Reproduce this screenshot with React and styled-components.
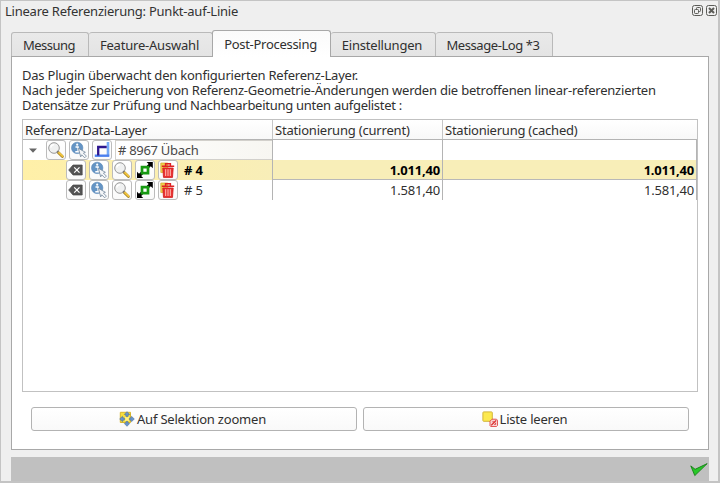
import React from "react";
import styled, { createGlobalStyle, css } from "styled-components";

const GlobalStyle = createGlobalStyle`
  *, *::before, *::after { box-sizing: border-box; }
  body { margin: 0; background: #efefef; }
`;

const Dock = styled.main`
  width: 720px;
  height: 483px;
  display: flex;
  flex-direction: column;
  overflow: hidden;
  background: #efefef;
  border: 1px solid #c4c4c4;
  border-right-width: 2px;
  border-bottom-width: 2px;
  color: #303030;
  font: 13px/15px "Noto Sans", "Open Sans", sans-serif;
`;

const Label = styled.span`
  letter-spacing: ${(p) => p.$track ?? -0.2}px;
  white-space: pre;
`;

const TitleBar = styled.header`
  height: 30px;
  flex: none;
  display: flex;
  justify-content: space-between;
  align-items: flex-start;
  padding: 3px 1px 0 4px;
  color: #333;
`;

const WindowButtons = styled.div`
  display: flex;
  gap: 3px;
  padding-top: 1px;
  svg { display: block; }
`;

const TabBar = styled.nav`
  height: 25px;
  flex: none;
  display: flex;
  align-items: flex-end;
  padding-left: 10px;
  z-index: 1;
`;

const Tab = styled.div`
  width: ${(p) => p.$width}px;
  height: 24px;
  display: flex;
  justify-content: center;
  padding: 5px 2px 0 0;
  background: linear-gradient(#e9e9e9, #e4e4e4);
  border: 1px solid #b9b9b9;
  border-left-width: ${(p) => (p.$first ? 1 : 0)}px;
  border-bottom: 0;
  border-radius: 3px 3px 0 0;
  ${(p) =>
    p.$active &&
    css`
      height: 27px;
      margin: 0 0 -1px -1px;
      border-left-width: 1px;
      border-color: #a8a8a8;
      padding-top: 6px;
      background: linear-gradient(#fafafa, #fff);
    `}
`;

const Panel = styled.section`
  width: 698px;
  height: 394px;
  flex: none;
  margin-left: 10px;
  padding: 11px 10px 0;
  background: #fff;
  border: 1px solid #a8a8a8;
`;

const Description = styled.div`
  display: flex;
  flex-direction: column;
  height: 51px;
`;

const Tree = styled.div`
  width: 676px;
  height: 273px;
  border: 1px solid #c1c1c1;
  background: #fff;
`;

const columns = css`
  display: grid;
  grid-template-columns: 250px 170px 1fr;
`;

const TreeHeader = styled.div`
  ${columns}
  height: 20px;
  background: linear-gradient(#fff, #f8f8f8);
  border-bottom: 1px solid #b4b4b4;
`;

const HeaderCell = styled.div`
  padding: 3px 0 0 2px;
  border-right: 1px solid ${(p) => (p.$last ? "transparent" : "#c6c6c6")};
`;

const TreeRow = styled.div`
  ${columns}
  height: 20px;
  ${(p) =>
    p.$selected &&
    css`
      background: #f8eeb8;
      border-bottom: 1px solid #b8b8b8;
      color: #000;
      font-weight: 700;
    `}
`;

const TreeCell = styled.div`
  display: flex;
  align-items: flex-start;
  padding-left: ${(p) => p.$indent}px;
  background: ${(p) => (p.$selected ? "linear-gradient(90deg, #fff0a8, #f8eeb8)" : "transparent")};
  border-right: 1px solid #b4b4b4;
`;

const ValueCell = styled.div`
  display: flex;
  justify-content: flex-end;
  padding: 3px 2px 0 0;
  border-right: 1px solid #b4b4b4;
`;

const Expander = styled.svg`
  width: 8px;
  height: 5px;
  margin: 8px 9px 0 0;
`;

const ToolButton = styled.button`
  width: 20px;
  height: 20px;
  flex: none;
  display: flex;
  align-items: center;
  justify-content: center;
  margin-right: 3px;
  padding: 0;
  border: 1px solid #bcbcbc;
  border-radius: 3px;
  background: linear-gradient(#fff, #fafafa);
  svg { width: 18px; height: 18px; display: block; flex: none; }
`;

const GroupName = styled.div`
  height: 20px;
  flex: 1;
  padding: 2px 0 0 2px;
  background: linear-gradient(90deg, #fff, #f7f6f1);
  border: 1px solid #d2d0cb;
  border-right: 0;
  color: #484848;
`;

const ItemName = styled.div`
  padding: 3px 0 0 3px;
`;

const Actions = styled.div`
  display: grid;
  grid-template-columns: 326px 326px;
  gap: 6px;
  padding: 15px 0 0 9px;
`;

const ActionButton = styled.button`
  height: 24px;
  display: flex;
  align-items: center;
  justify-content: center;
  gap: 2px;
  padding: 0 3px 0 0;
  border: 1px solid #b3b3b3;
  border-radius: 3px;
  background: linear-gradient(#fff, #f9f9f9);
  color: #303030;
  font: inherit;
  svg { width: 16px; height: 16px; display: block; }
`;

const StatusBar = styled.footer`
  width: 698px;
  flex: 1;
  display: flex;
  align-items: flex-start;
  justify-content: flex-end;
  margin: 7px 0 0 10px;
  padding: 6px 1px 0 0;
  background: #c0c0c0;
`;

const FloatIcon = () => (
  <svg width="11" height="11" viewBox="0 0 11 11" fill="none" stroke="#5c5c58">
    <rect x=".5" y=".5" width="10" height="10" rx="2" />
    <rect x="4.5" y="2.5" width="4" height="4" rx=".8" />
    <rect x="2.5" y="4.5" width="4" height="4" rx=".8" fill="#efefef" />
  </svg>
);

const CloseIcon = () => (
  <svg width="11" height="11" viewBox="0 0 11 11" fill="none" stroke="#5c5c58">
    <rect x=".5" y=".5" width="10" height="10" rx="2" />
    <path d="M3 3l5 5M8 3L3 8" strokeWidth="2" />
  </svg>
);

const MagnifierIcon = () => (
  <svg viewBox="0 0 18 18">
    <path d="M11 11.2l4.4 4.3" stroke="#a8872c" strokeWidth="2.8" strokeLinecap="round" />
    <path d="M11.6 11.4l3.9 3.8" stroke="#f4c63c" strokeWidth="1.7" strokeLinecap="round" />
    <circle cx="7" cy="7" r="5.3" fill="#f0f1f1" stroke="#999" strokeWidth="1" />
    <path d="M3.7 6.6a3.5 3.5 0 0 1 3.4-3" fill="none" stroke="#fff" strokeWidth="1.3" />
    <path d="M10 10l1.3 1.3" stroke="#777" strokeWidth="1.5" />
  </svg>
);

const IdentifyIcon = () => (
  <svg viewBox="0 0 18 18">
    <circle cx="7.2" cy="6.9" r="5.7" fill="#6494c4" stroke="#5585b6" strokeWidth=".6" />
    <circle cx="7.2" cy="3.7" r="1.1" fill="#fff" />
    <path d="M5.5 6h2.6v4.5M5.3 10.7h4.1" fill="none" stroke="#fff" strokeWidth="1.4" />
    <path d="M8.4 7.3l7 4-2 .8 3 3-1.7 1.7-3-3-1 2.1z" fill="#f4f6f8" stroke="#73879b" strokeWidth=".8" strokeLinejoin="round" />
  </svg>
);

const SegmentIcon = () => (
  <svg viewBox="0 0 18 18" fill="none">
    <path d="M15 1v13.7" stroke="#74a9f6" strokeWidth="2.6" />
    <path d="M16.3 14.7H1.8" stroke="#4a7fee" strokeWidth="2.4" />
    <path d="M5.2 14.4V6h8.5" stroke="#2d168e" strokeWidth="2.3" />
  </svg>
);

const ClearIcon = () => (
  <svg viewBox="0 0 18 18">
    <path d="M6 4h9.2v10H6L1.7 9z" fill="#545454" stroke="#494949" strokeWidth=".7" strokeLinejoin="round" />
    <path d="M7.2 6.3l5.3 5.3M12.5 6.3l-5.3 5.3" stroke="#fff" strokeWidth="1.2" />
  </svg>
);

const ZoomToIcon = () => (
  <svg viewBox="0 0 18 18">
    <path d="M10.6 1h6.2v6.2l-2-2-1.8 1.8-2.2-2.2 1.8-1.8zM1 10.8V17h6.2l-2-2L7 13.2 4.8 11 3 12.8z" fill="#000" />
    <path d="M6 6.2h6v6H6z" fill="#fff" stroke="#189a12" strokeWidth="2.7" />
  </svg>
);

const TrashIcon = () => (
  <svg viewBox="0 0 18 18">
    <path d="M1.8 2h7v9.5h-7z" fill="#f0cf4c" stroke="#d0a92c" strokeWidth=".7" />
    <path d="M3.8 7h10.4l-.7 9.4H4.5z" fill="#ea3232" stroke="#cf1a1a" strokeWidth=".8" />
    <path d="M2.8 5.3h12.4M6.6 4.8V2.8h4.8v2" fill="none" stroke="#de2222" strokeWidth="1.5" />
    <path d="M6.7 8.2v6.8M9 8.2v6.8M11.3 8.2v6.8" stroke="#ffc1b5" strokeWidth="1" />
  </svg>
);

const ZoomSelectionIcon = () => (
  <svg viewBox="0 0 16 16">
    <path d="M1.3 1.3h10.2v10.2H1.3z" fill="#f8df3b" stroke="#d7b52c" />
    <path
      d="M8 .7l2.7 2.8H9.2v1.9H6.8V3.5H5.3zM8 15.3l-2.7-2.8h1.5v-1.9h2.4v1.9h1.5zM.7 8l2.8-2.7v1.5h1.9v2.4H3.5v1.5zM15.3 8l-2.8-2.7v1.5h-1.9v2.4h1.9v1.5z"
      fill="#6795cc"
      stroke="#4c6f9b"
      strokeWidth=".6"
    />
    <path d="M6 6l4 4M10 6l-4 4" stroke="#fff089" strokeWidth="1.6" />
  </svg>
);

const DeselectIcon = () => (
  <svg viewBox="0 0 16 16">
    <rect x=".9" y=".9" width="9.4" height="9.4" rx=".8" fill="#fce94f" stroke="#d3b63a" />
    <path d="M10 8.2h4.5l1 1v5.3l-1 1H8.7l-.7-.8v-4.5z" fill="#f7d5d5" stroke="#e04848" strokeWidth=".9" />
    <path d="M9.2 14.4l5-5" stroke="#d92525" strokeWidth="1.2" />
    <path d="M10.3 10.8h2M12.2 13.4h1.4v-1.6" fill="none" stroke="#d92525" strokeWidth=".8" />
  </svg>
);

const CheckIcon = () => (
  <svg width="18" height="14" viewBox="0 0 18 14">
    <path d="M.8 2.9l4.3 3.4L17.2.6 4.8 12.6z" fill="#27c827" stroke="#178017" strokeWidth=".9" strokeLinejoin="round" />
  </svg>
);

const tools = [ClearIcon, IdentifyIcon, MagnifierIcon, ZoomToIcon, TrashIcon];

const tabs = [
  { name: "Messung", width: 78, track: -0.5 },
  { name: "Feature-Auswahl", width: 124, track: -0.2 },
  { name: "Post-Processing", width: 119, track: -0.29, active: true },
  { name: "Einstellungen", width: 105, track: -0.2 },
  { name: "Message-Log *3", width: 117, track: -0.43 },
];

const rows = [
  { name: "# 4", value: "1.011,40", selected: true },
  { name: "# 5", value: "1.581,40" },
];

function ItemRow({ name, value, selected }) {
  return (
    <TreeRow $selected={selected}>
      <TreeCell $indent={43} $selected={selected}>
        {tools.map((Icon, i) => (
          <ToolButton key={i}><Icon /></ToolButton>
        ))}
        <ItemName><Label $track={-0.1}>{name}</Label></ItemName>
      </TreeCell>
      <ValueCell><Label>{value}</Label></ValueCell>
      <ValueCell><Label>{value}</Label></ValueCell>
    </TreeRow>
  );
}

export default function App() {
  return (
    <>
      <GlobalStyle />
      <Dock>
        <TitleBar>
          <Label $track={-0.23}>Lineare Referenzierung: Punkt-auf-Linie</Label>
          <WindowButtons>
            <FloatIcon />
            <CloseIcon />
          </WindowButtons>
        </TitleBar>
        <TabBar>
          {tabs.map((t, i) => (
            <Tab key={t.name} $width={t.width} $active={t.active} $first={i === 0}>
              <Label $track={t.track}>{t.name}</Label>
            </Tab>
          ))}
        </TabBar>
        <Panel>
          <Description>
            <Label $track={-0.22}>Das Plugin überwacht den konfigurierten Referenz-Layer.</Label>
            <Label $track={-0.22}>
              Nach jeder Speicherung von Referenz-Geometrie-Änderungen werden die betroffenen linear-referenzierten
            </Label>
            <Label $track={-0.27}>Datensätze zur Prüfung und Nachbearbeitung unten aufgelistet :</Label>
          </Description>
          <Tree>
            <TreeHeader>
              <HeaderCell><Label $track={-0.16}>Referenz/Data-Layer</Label></HeaderCell>
              <HeaderCell><Label $track={-0.2}>Stationierung (current)</Label></HeaderCell>
              <HeaderCell $last><Label $track={-0.23}>Stationierung (cached)</Label></HeaderCell>
            </TreeHeader>
            <TreeRow>
              <TreeCell $indent={6}>
                <Expander viewBox="0 0 8 5"><path d="M0 .5h8L4 4.8z" fill="#666" /></Expander>
                <ToolButton><MagnifierIcon /></ToolButton>
                <ToolButton><IdentifyIcon /></ToolButton>
                <ToolButton><SegmentIcon /></ToolButton>
                <GroupName><Label $track={-0.3}># 8967 Übach</Label></GroupName>
              </TreeCell>
              <ValueCell />
              <ValueCell />
            </TreeRow>
            {rows.map((r) => <ItemRow key={r.name} {...r} />)}
          </Tree>
          <Actions>
            <ActionButton><ZoomSelectionIcon /><Label>Auf Selektion zoomen</Label></ActionButton>
            <ActionButton><DeselectIcon /><Label>Liste leeren</Label></ActionButton>
          </Actions>
        </Panel>
        <StatusBar><CheckIcon /></StatusBar>
      </Dock>
    </>
  );
}
